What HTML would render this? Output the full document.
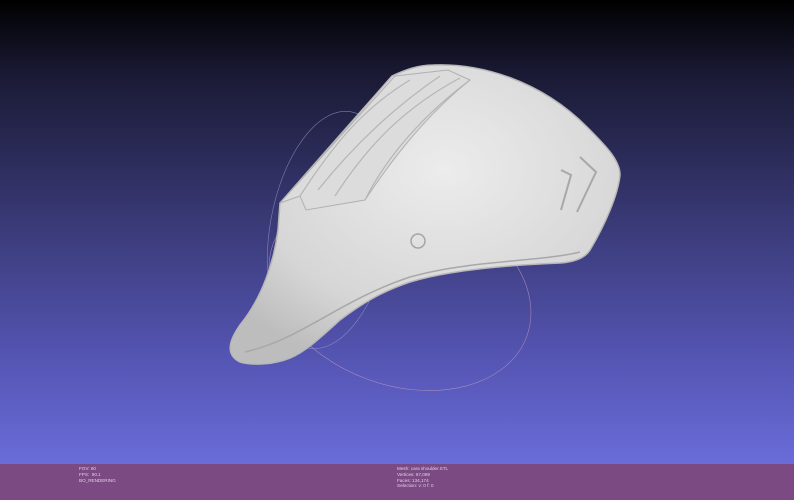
<!DOCTYPE html>
<html><head><style>
html,body{margin:0;padding:0;width:794px;height:500px;overflow:hidden}
body{position:relative;background:linear-gradient(#000 0%,#1a1a35 15%,#3a3a78 45%,#5353b0 70%,#7274e6 100%);}
.bar{position:absolute;left:0;top:464px;width:794px;height:36px;background:#7c4a83}
.t{position:absolute;font:4.6px/5.8px "Liberation Sans",sans-serif;color:#e0d0e4}
</style></head><body>
<svg width="794" height="464" style="position:absolute;left:0;top:0">
<defs>
<radialGradient id="g" cx="0.55" cy="0.35" r="0.7">
<stop offset="0" stop-color="#ececec"/><stop offset="0.7" stop-color="#d6d6d6"/><stop offset="1" stop-color="#bdbdbd"/></radialGradient>
</defs>
<g fill="none" stroke-width="0.6" opacity="0.7">
<ellipse cx="400" cy="290" rx="135" ry="95" stroke="#c8a0c0" transform="rotate(20 400 290)"/>
<ellipse cx="330" cy="230" rx="60" ry="120" stroke="#a0a0d0" transform="rotate(10 330 230)"/>
</g>
<path d="M240,362 C226,355 228,342 240,325 C262,298 274,262 278,230 L280,203 L392,76 C405,70 418,65 433,65 C480,63 540,80 587,127 C605,145 620,160 620,175 C618,195 605,225 590,250 C585,258 575,262 560,263 C510,265 450,270 410,282 C380,292 360,305 340,320 C320,338 305,352 290,358 C275,364 255,366 240,362 Z" fill="url(#g)" stroke="#b8b8b8" stroke-width="1.5"/>
<path d="M245,352 C300,340 340,300 410,277 C470,260 540,262 580,252" fill="none" stroke="#a8a8a8" stroke-width="1.5"/>
<path d="M280,203 L300,196 L306,210 L365,200 C385,170 420,120 470,80 L448,70 L395,76 Z" fill="#dcdcdc" stroke="#b0b0b0"/>
<path d="M300,196 C330,150 360,110 410,80 M318,190 C350,150 390,110 440,76 M335,196 C365,150 400,110 460,78 M365,200 C380,170 410,125 470,80" fill="none" stroke="#b5b5b5" stroke-width="1.2"/>
<circle cx="418" cy="241" r="7" fill="none" stroke="#a5a5a5" stroke-width="1.5"/>
<path d="M561,170 L571,175 L561,210 M580,157 L596,172 L577,212" fill="none" stroke="#a8a8a8" stroke-width="2"/>
</svg>
<div class="bar"></div>
<div class="t" style="left:79px;top:466px">FOV: 60<br>FPS: &nbsp;90.1<br>BO_RENDERING</div>
<div class="t" style="left:397px;top:466px">Mesh: cara shoulder.STL<br>Vertices: 67,089<br>Faces: 134,174<br>Selection: v: 0 f: 0</div>
</body></html>
